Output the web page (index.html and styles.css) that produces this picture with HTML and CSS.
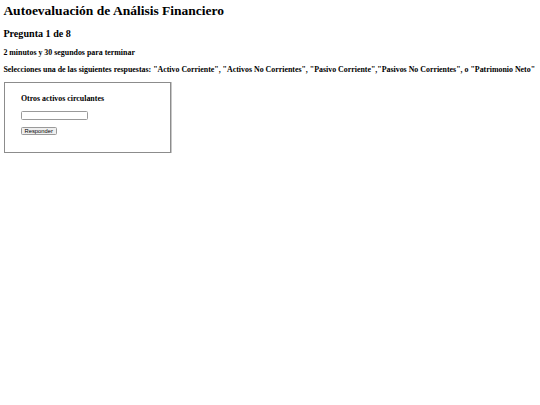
FILE: index.html
```html
<!DOCTYPE html>
<html lang="es">
<head>
<meta charset="utf-8">
<title>Autoevaluación de Análisis Financiero</title>
<link rel="stylesheet" href="styles.css">
</head>
<body>
<h1 class="title">Autoevaluación de Análisis Financiero</h1>
<h2 class="question">Pregunta 1 de 8</h2>
<h3 class="timer">2 minutos y 30 segundos para terminar</h3>
<h3 class="instructions">Selecciones una de las siguientes respuestas: "Activo Corriente", "Activos No Corrientes", "Pasivo Corriente","Pasivos No Corrientes", o "Patrimonio Neto"</h3>
<div class="card">
  <h3 class="item">Otros activos circulantes</h3>
  <input class="answer" type="text">
  <button class="submit" type="button">Responder</button>
</div>
</body>
</html>
```
FILE: styles.css
```css
html, body {
  background: #fff;
}
body {
  margin: 3.375px;
  font-family: "Liberation Serif", "Times New Roman", serif;
  color: #000;
}
.title {
  font-size: 13.5px;
  font-weight: bold;
  margin: 0 0 9.05px;
}
.question {
  font-size: 10.125px;
  font-weight: bold;
  margin: 9.05px 0 8.4px;
}
.timer, .instructions {
  font-size: 7.9px;
  font-weight: bold;
  margin: 7.9px 0;
  white-space: nowrap;
}
.card {
  box-sizing: border-box;
  width: 167px;
  margin: 7.9px 0 0 0.6px;
  border: 1px solid #8c8c8c;
  box-shadow: 1px 0 0 #c8c8c8;
  padding: 3.6px 16px 17px;
  display: flex;
  flex-direction: column;
  align-items: flex-start;
}
.item {
  font-size: 7.9px;
  font-weight: bold;
  margin: 7.9px 0 8.4px;
}
.answer {
  box-sizing: border-box;
  width: 67px;
  height: 8.4px;
  margin: 0 0 7px;
  padding: 0;
  border: 1px solid #9a9a9a;
  border-radius: 1.5px;
  background: #fff;
  font-size: 5.6px;
}
.submit {
  box-sizing: border-box;
  height: 8.6px;
  margin: 0;
  padding: 0 2.6px;
  border: 1px solid #9a9a9a;
  border-radius: 1.5px;
  background: #efefef;
  color: #000;
  font-family: "Liberation Sans", Arial, sans-serif;
  font-size: 5.8px;
  line-height: 6px;
}
```
